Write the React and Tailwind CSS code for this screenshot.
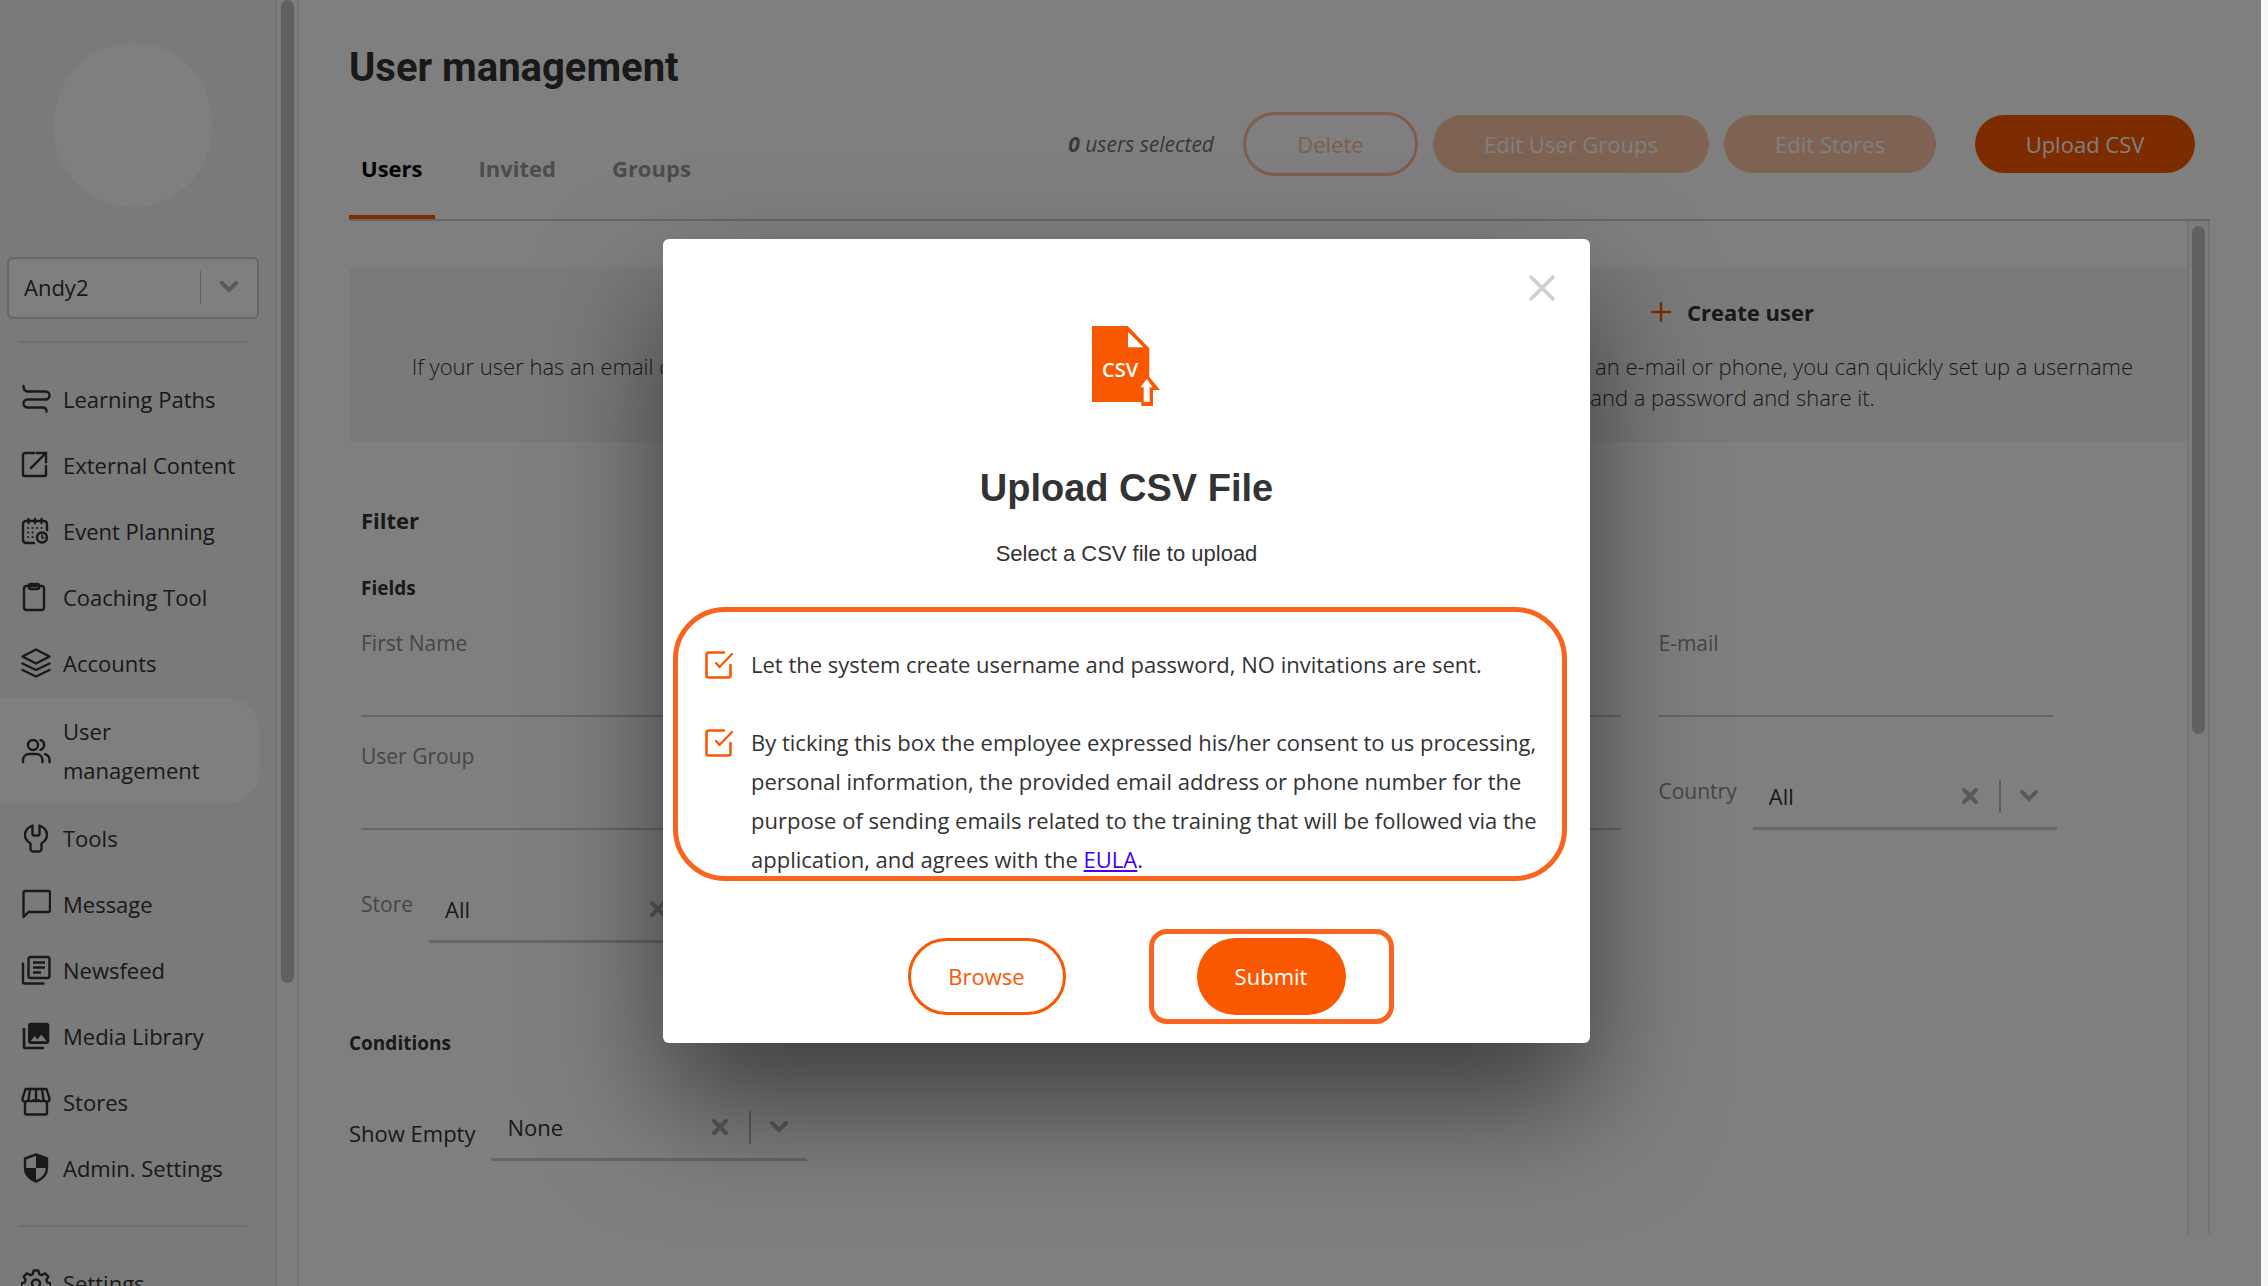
import { useState } from "react";
import { X } from "lucide-react";
import { MdPhotoLibrary } from "react-icons/md";

function Icon({ children }) {
  return (
    <svg
      viewBox="0 0 30 30"
      className="size-[30px] shrink-0"
      fill="none"
      stroke="currentColor"
      strokeWidth="2.4"
      strokeLinecap="round"
      strokeLinejoin="round"
      aria-hidden="true"
    >
      {children}
    </svg>
  );
}

const icons = {
  paths: (
    <Icon>
      <path d="M2.5 2c0 4 1.500 5.500 4.500 5.500h17.500a4 4 0 0 1 0 8H6.500a4 4 0 0 0 0 8h15c3 0 4 1 4 4" />
    </Icon>
  ),
  external: (
    <Icon>
      <path d="M13 3H4a2 2 0 0 0-2 2v20a1 1 0 0 0 1 1h21a1 1 0 0 0 1-1V16" />
      <path d="M16 3h9v9M25 3L10 18" strokeLinecap="square" strokeLinejoin="miter" />
    </Icon>
  ),
  event: (
    <Icon>
      <path d="M13 27H5a3 3 0 0 1-3-3V8a3 3 0 0 1 3-3h18a3 3 0 0 1 3 3v6" />
      <path d="M7.500 3v4M14 3v4M20.500 3v4" />
      <circle cx="21" cy="21.500" r="5" />
      <path d="M21 19v3h2" strokeWidth="1.600" />
      <path d="M7 12h.1M11.500 12h.1M16 12h.1M20.500 12h.1M7 16.500h.1M11.500 16.500h.1M7 21h.1M11.500 21h.1" strokeWidth="2" />
    </Icon>
  ),
  clipboard: (
    <Icon>
      <rect x="3" y="4" width="20" height="24" rx="2.500" />
      <rect x="8" y="2" width="10" height="5" rx="1.500" />
    </Icon>
  ),
  layers: (
    <Icon>
      <path d="M15 1.500L28.500 8.500 15 15.500 1.500 8.500z" />
      <path d="M1.500 15.500l13.500 6.500 13.500-6.500" />
      <path d="M1.500 22l13.500 6.500L28.500 22" />
    </Icon>
  ),
  users: (
    <Icon>
      <circle cx="12" cy="9" r="5" />
      <path d="M2 26v-2a6 6 0 0 1 6-6h7.500a6 6 0 0 1 6 6v2" />
      <path d="M19.500 4.200a5 5 0 0 1 0 9.600M28.500 26v-2a6 6 0 0 0-4.500-5.800" />
    </Icon>
  ),
  wrench: (
    <Icon>
      <path d="M11.500 2.500v8.500a1.500 1.500 0 0 0 1.500 1.500h4a1.500 1.500 0 0 0 1.500-1.500V2.500c5 2 7.500 6 7.500 9.500 0 4-2.500 6.500-5.500 8.500v5.500a2.500 2.500 0 0 1-2.500 2.500h-6a2.500 2.500 0 0 1-2.500-2.500v-5.500C6.500 18.500 4 16 4 12c0-3.500 2.500-7.500 7.500-9.500z" />
    </Icon>
  ),
  message: (
    <Icon>
      <path d="M2.500 28V3.500a1.500 1.500 0 0 1 1.500-1.500h23.500a1.500 1.500 0 0 1 1.500 1.500v18a1.500 1.500 0 0 1-1.500 1.500H7.500z" />
    </Icon>
  ),
  news: (
    <Icon>
      <rect x="7.500" y="2" width="21" height="21" rx="2" />
      <path d="M12 7.500h12M12 12.500h12M12 17.500h8M2 7.500v19.500a1.500 1.500 0 0 0 1.500 1.500H23.500" strokeLinecap="butt" />
    </Icon>
  ),
  media: <MdPhotoLibrary className="-mx-px size-[32px] shrink-0" aria-hidden="true" />,
  store: (
    <Icon>
      <path d="M4.500 2h21l3 9.500a3 3 0 0 1-5.700 1.500 3.200 3.200 0 0 1-5.200 0 3.200 3.200 0 0 1-5.200 0 3.200 3.200 0 0 1-5.200 0A3 3 0 0 1 1.500 11.500z" />
      <path d="M9 2L7.500 13M15 2v11M21 2l1.500 11" />
      <path d="M4 15v11a1.500 1.500 0 0 0 1.500 1.500h19A1.500 1.500 0 0 0 26 26V15" />
    </Icon>
  ),
  shield: (
    <Icon>
      <path d="M15 1.500l11 4v9.500c0 6-4.500 11.500-11 13.500C8.500 26.500 4 21 4 15V5.500z" />
      <path d="M15 1.500l11 4v9.500H15zM15 15v13.500C8.500 26.500 4 21 4 15z" fill="currentColor" stroke="none" />
    </Icon>
  ),
  gear: (
    <Icon>
      <circle cx="15" cy="15.500" r="4" />
      <path d="M12.700 2.500h4.600l1 3.600 2.500 1.100 3.300-1.900 3.200 3.200-1.900 3.400 1 2.400 3.100 1v4.400l-3.100 1-1 2.400 1.900 3.400-3.200 3.200-3.300-1.900-2.500 1.100-1 3.600h-4.600l-1-3.600-2.500-1.100-3.300 1.900-3.200-3.200 1.900-3.400-1-2.400-3.100-1v-4.400l3.100-1 1-2.400-1.900-3.400 3.200-3.200 3.300 1.900 2.500-1.100z" />
    </Icon>
  ),
};

const navItems = [
  { label: "Learning Paths", icon: icons.paths },
  { label: "External Content", icon: icons.external },
  { label: "Event Planning", icon: icons.event },
  { label: "Coaching Tool", icon: icons.clipboard },
  { label: "Accounts", icon: icons.layers },
  { label: "User management", icon: icons.users, active: true },
  { label: "Tools", icon: icons.wrench },
  { label: "Message", icon: icons.message },
  { label: "Newsfeed", icon: icons.news },
  { label: "Media Library", icon: icons.media },
  { label: "Stores", icon: icons.store },
  { label: "Admin. Settings", icon: icons.shield },
];

function NavItem({ item }) {
  return (
    <li className={item.active ? "my-0.5" : ""}>
      <a
        href="#"
        className={
          item.active
            ? "flex h-[105px] w-[260px] items-center gap-3 rounded-r-[33px] bg-white pl-[21px] pr-10"
            : "flex h-[66px] items-center gap-3 whitespace-nowrap pl-[21px]"
        }
      >
        {item.icon}
        <span>{item.label}</span>
      </a>
    </li>
  );
}

function Chevron() {
  return (
    <svg viewBox="0 0 20 12" className="h-3 w-5" fill="none" stroke="currentColor" strokeWidth="4" strokeLinecap="round" aria-hidden="true">
      <path d="M3 2l7 7 7-7" />
    </svg>
  );
}

function UnderlineSelect({ id, value, className = "" }) {
  return (
    <div className={`flex h-[65px] shrink-0 items-center border-b-[3px] border-[#ccc] ${className}`}>
      <select id={id} defaultValue={value} className="min-w-0 flex-1 appearance-none bg-transparent pl-4 text-[22px] outline-none">
        <option>{value}</option>
      </select>
      <button type="button" aria-label="Clear" className="px-[17px] text-[#b3b3b3]">
        <X className="size-6" strokeWidth={4} />
      </button>
      <span className="h-[33px] w-[2px] bg-[#bbb]" />
      <span className="px-[18px] text-[#b3b3b3]">
        <Chevron />
      </span>
    </div>
  );
}

function TextField({ id, label }) {
  return (
    <div className="flex h-[89px] flex-col border-b-2 border-[#ccc]">
      <label htmlFor={id} className="text-[#8c8c8c]">
        {label}
      </label>
      <input id={id} type="text" className="w-full flex-1 bg-transparent outline-none" />
    </div>
  );
}

function Sidebar() {
  return (
    <aside className="flex shrink-0 bg-[#f4f4f4]">
      <div className="w-[275px] text-[22px] leading-[39px]">
        <div className="ml-[54px] mt-[43px] h-[164px] w-[158px] rounded-full bg-white" />
        <div className="ml-[7px] mt-[50px] flex h-[62px] w-[252px] items-center rounded-md border-2 border-[#ccc] bg-white pb-0.5">
          <select aria-label="Account" defaultValue="Andy2" className="min-w-0 flex-1 appearance-none bg-transparent pl-[15px] outline-none">
            <option>Andy2</option>
          </select>
          <span className="h-[33px] w-px bg-[#bbb]" />
          <span className="px-[18px] text-[#b3b3b3]">
            <Chevron />
          </span>
        </div>
        <hr className="ml-[19px] mt-[22px] w-[228px] border-t-2 border-[#e0e0e0]" />
        <ul className="mt-[23px]">
          {navItems.map((item) => (
            <NavItem key={item.label} item={item} />
          ))}
        </ul>
        <hr className="ml-[19px] mt-6 w-[228px] border-t-2 border-[#e0e0e0]" />
        <ul className="mt-[23px]">
          <NavItem item={{ label: "Settings", icon: icons.gear }} />
        </ul>
      </div>
      <div className="w-[24px] border-x-2 border-[#e8e8e8] bg-[#fafafa] px-1">
        <div className="h-[983px] w-[13px] rounded-full bg-[#c1c1c1]" />
      </div>
    </aside>
  );
}

function Tabs() {
  return (
    <div className="flex gap-8 text-[22px] font-bold leading-[30px]">
      <button type="button" className="h-[80px] border-b-4 border-[#fa5800] px-3 pb-[18px] text-black">
        Users
      </button>
      <button type="button" className="h-[80px] border-b-4 border-transparent px-3 pb-[18px] text-[#999]">
        Invited
      </button>
      <button type="button" className="h-[80px] border-b-4 border-transparent px-3 pb-[18px] text-[#999]">
        Groups
      </button>
    </div>
  );
}

function Actions() {
  return (
    <div className="flex items-center gap-[15px] text-[22px] leading-[30px]">
      <p className="mr-[14px] text-[21px] italic text-[#707070]">
        <b>0</b> users selected
      </p>
      <button type="button" disabled className="h-16 w-[175px] rounded-full border-[3px] border-[#fa5800] text-[#fa5800] opacity-40">
        Delete
      </button>
      <button type="button" disabled className="h-[58px] w-[276px] rounded-full bg-[#fa5800] text-white opacity-35">
        Edit User Groups
      </button>
      <button type="button" disabled className="h-[58px] w-[212px] rounded-full bg-[#fa5800] text-white opacity-35">
        Edit Stores
      </button>
      <button type="button" className="ml-6 h-[58px] w-[220px] rounded-full bg-[#fa5800] text-white">
        Upload CSV
      </button>
    </div>
  );
}

function InfoBox({ title, children }) {
  return (
    <div className="flex flex-1 flex-col items-center pl-[58px] pr-12 pt-[26px] text-center">
      <h2 className="flex items-center gap-4 text-[22px] font-bold leading-[38px]">
        <svg viewBox="0 0 20 20" className="size-5 text-[#fa5800]" stroke="currentColor" strokeWidth="2.400" strokeLinecap="round" aria-hidden="true">
          <path d="M10 1v18M1 10h18" />
        </svg>
        {title}
      </h2>
      <p className="mt-5 text-[22px] font-light leading-[31px]">{children}</p>
    </div>
  );
}

function Filters() {
  return (
    <div className="pt-[63px] text-[21px] leading-[30px]">
      <div className="ml-3">
        <h2 className="text-[22px] font-bold">Filter</h2>
        <h3 className="mt-[38px] text-[19px] font-bold">Fields</h3>
        <div className="mr-[134px] mt-[25px] grid grid-cols-4 gap-x-[38px] gap-y-6">
          <TextField id="first" label="First Name" />
          <TextField id="last" label="Last Name" />
          <TextField id="phone" label="Phone" />
          <TextField id="email" label="E-mail" />
          <TextField id="group" label="User Group" />
          <TextField id="role" label="Role" />
          <TextField id="lang" label="Language" />
          <div className="flex items-end gap-4">
            <label htmlFor="country" className="mb-6 text-[#8c8c8c]">
              Country
            </label>
            <UnderlineSelect id="country" value="All" className="w-[304px]" />
          </div>
          <div className="flex h-[89px] items-end gap-4">
            <label htmlFor="store" className="mb-6 text-[#8c8c8c]">
              Store
            </label>
            <UnderlineSelect id="store" value="All" className="w-[316px]" />
          </div>
        </div>
      </div>
      <h3 className="mt-[85px] text-[19px] font-bold">Conditions</h3>
      <div className="mt-[38px] flex items-center gap-4 text-[22px]">
        <label htmlFor="empty" className="mt-2">
          Show Empty
        </label>
        <UnderlineSelect id="empty" value="None" className="w-[316px]" />
      </div>
    </div>
  );
}

function CheckRow({ id, children }) {
  const [checked, setChecked] = useState(true);
  return (
    <div className="flex gap-[18px]">
      <span className="relative mt-[6px] size-7 shrink-0">
        <input
          id={id}
          type="checkbox"
          checked={checked}
          onChange={(e) => setChecked(e.target.checked)}
          className="size-7 cursor-pointer appearance-none"
        />
        <svg
          viewBox="0 0 28 28"
          className="pointer-events-none absolute inset-0 size-7 text-[#fa5800]"
          fill="none"
          stroke="currentColor"
          strokeWidth="2.600"
          strokeLinecap="round"
          strokeLinejoin="round"
          aria-hidden="true"
        >
          <path d="M19 1.500H3.500a2 2 0 0 0-2 2v21a2 2 0 0 0 2 2h20a2 2 0 0 0 2-2V14" />
          {checked ? <path d="M11 12l3.500 4L27 3" strokeWidth="2.200" /> : null}
        </svg>
      </span>
      <label htmlFor={id}>{children}</label>
    </div>
  );
}

function CsvIcon() {
  return (
    <svg viewBox="0 0 70 80" className="h-20 w-[70px]" aria-hidden="true">
      <path d="M0 0h35.700L57.300 22.300V51L68 64h-7v16H49.300v-4H0z" fill="#fa5800" />
      <path d="M36 5.700v15.600h15.500z" fill="#fff" />
      <path d="M54.700 52.700l6 8.600h-3v14.400h-6V61.300h-3z" fill="#fff" />
      <text x="10" y="51" fill="#fff" fontFamily="Open Sans, sans-serif" fontSize="20" fontWeight="600">
        CSV
      </text>
    </svg>
  );
}

function UploadDialog() {
  return (
    <div
      role="dialog"
      aria-labelledby="upload-title"
      className="relative flex h-[804px] w-[927px] flex-col items-center rounded-md bg-white px-[10px] pt-[87px] shadow-[0_60px_120px_rgba(0,0,0,0.5)]"
    >
      <button type="button" aria-label="Close" className="absolute right-[26px] top-[27px] text-[#cfcfcf]">
        <X className="size-11" strokeWidth={2} />
      </button>
      <CsvIcon />
      <h2 id="upload-title" className="mt-[56px] font-['Liberation_Sans',Arial,sans-serif] text-[38px] font-bold leading-[52px]">
        Upload CSV File
      </h2>
      <p className="mt-[25px] font-['Liberation_Sans',Arial,sans-serif] text-[22px] leading-[30px]">Select a CSV file to upload</p>

      <div className="relative mt-[38px] flex w-[894px] flex-col gap-[39px] self-start pb-0.5 pl-8 pr-1 pt-[38px] text-[22px] leading-[39px]">
        <CheckRow id="create">Let the system create username and password, NO invitations are sent.</CheckRow>
        <CheckRow id="consent">
          By ticking this box the employee expressed his/her consent to us processing, personal information, the provided
          email address or phone number for the purpose of sending emails related to the training that will be followed via
          the application, and agrees with the{" "}
          <a href="#" className="text-[#4000f0] underline">
            EULA
          </a>
          .
        </CheckRow>
        <div className="pointer-events-none absolute inset-0 rounded-[52px] border-[5px] border-[#fa641e]" />
      </div>

      <div className="mt-[57px] flex gap-[131px] text-[22px]">
        <button type="button" className="h-[77px] w-[158px] rounded-full border-[3px] border-[#fa5800] text-[#fa5800]">
          Browse
        </button>
        <div className="relative">
          <button type="button" className="h-[77px] w-[149px] rounded-full bg-[#fa5800] text-white">
            Submit
          </button>
          <div className="pointer-events-none absolute -inset-x-12 -inset-y-[9px] rounded-[18px] border-[5px] border-[#fa641e]" />
        </div>
      </div>
    </div>
  );
}

export default function App() {
  return (
    <div className="h-screen bg-[#f8f8f8] pr-[7px] font-['Open_Sans','Noto_Sans',sans-serif] text-[#333]">
      <div className="relative flex h-full overflow-hidden bg-white">
        <Sidebar />
        <main className="flex min-w-0 flex-1 flex-col pl-[50px] pr-[51px]">
          <h1 className="mt-10 font-[Roboto,sans-serif] text-[40px] font-bold leading-[56px]">User management</h1>
          <div className="mt-4 flex items-start justify-between border-b-2 border-[#ccc] pr-[15px]">
            <div className="mt-[27px]">
              <Tabs />
            </div>
            <Actions />
          </div>
          <div className="mb-[52px] flex min-h-0 flex-1">
            <div className="min-w-0 flex-1 overflow-hidden pt-[46px]">
              <div className="flex h-[175px] bg-[#f5f5f5]">
                <InfoBox title="Invite user">
                  If your user has an email or a phone number, you can send an invitation by e-mail or text message.
                </InfoBox>
                <InfoBox title="Create user">
                  If your user does not have an e-mail or phone, you can quickly set up a username and a password and share it.
                </InfoBox>
              </div>
              <Filters />
            </div>
            <div className="w-[23px] border-x-2 border-[#e8e8e8] bg-[#fafafa] px-[3px] pt-[5px]">
              <div className="h-[508px] w-[13px] rounded-full bg-[#c1c1c1]" />
            </div>
          </div>
        </main>
        <div className="absolute inset-0 flex items-center justify-center bg-black/50 pb-1 pr-2">
          <UploadDialog />
        </div>
      </div>
    </div>
  );
}
